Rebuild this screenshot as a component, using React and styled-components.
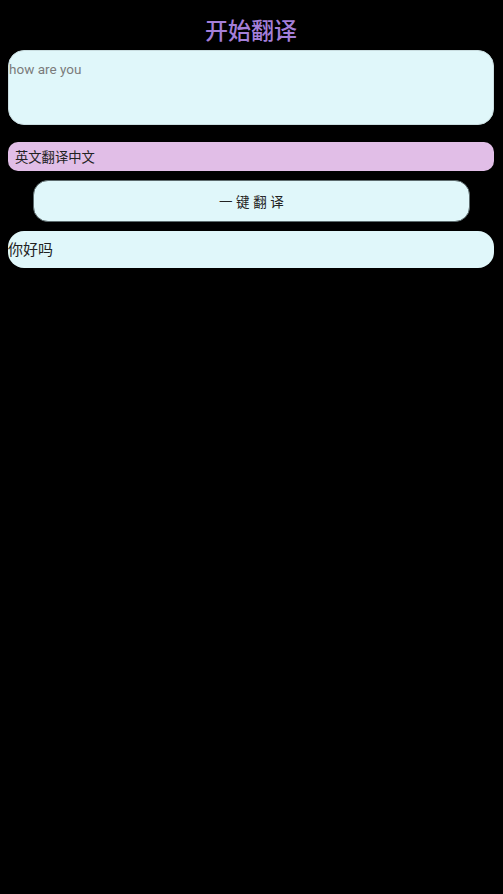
import React, { useState } from 'react'
import styled, { createGlobalStyle } from 'styled-components'

const GlobalStyle = createGlobalStyle`
    html, body {
        margin: 0;
        padding: 0;
        background: #000000;
    }
    body {
        font-family: Roboto, "Noto Sans CJK SC", sans-serif;
    }
`

const Page = styled.div`
    width: 503px;
    min-height: 894px;
    background: #000000;
    padding: 0 9px 0 8px;
    box-sizing: border-box;
    display: flex;
    flex-direction: column;
`

const Title = styled.h1`
    margin: 12px 0 4px 0;
    height: 34px;
    line-height: 34px;
    text-align: center;
    font-family: "Noto Sans CJK SC", sans-serif;
    font-weight: 500;
    font-size: 23px;
    color: #a47fd9;
`

const InputArea = styled.textarea`
    height: 75px;
    box-sizing: border-box;
    margin: 0;
    padding: 8px 0 0 0;
    border: 1px solid #c9dde0;
    border-radius: 16px;
    background: #e0f7fa;
    resize: none;
    outline: none;
    font-family: Roboto, "Noto Sans CJK SC", sans-serif;
    font-size: 13.5px;
    line-height: 20px;
    color: #222222;
    &::placeholder {
        color: #7b7b7b;
    }
`

const ModeBar = styled.div`
    margin-top: 17px;
    height: 29px;
    box-sizing: border-box;
    padding-left: 7px;
    display: flex;
    align-items: center;
    border-radius: 10px;
    background: #e1bee7;
    font-family: "Noto Sans CJK SC", sans-serif;
    font-size: 13.3px;
    color: #222222;
`

const TranslateBtn = styled.button`
    margin: 9px 24px 0 25px;
    height: 42px;
    border: 1px solid #5d6b6d;
    border-radius: 15px;
    background: #e0f7fa;
    font-family: "Noto Sans CJK SC", sans-serif;
    font-size: 13.5px;
    letter-spacing: 0.3px;
    color: #222222;
    cursor: pointer;
`

const ResultBox = styled.div`
    margin-top: 9px;
    height: 37px;
    box-sizing: border-box;
    padding-bottom: 2px;
    display: flex;
    align-items: center;
    border-radius: 16px;
    background: #e0f7fa;
    font-family: "Noto Sans CJK SC", sans-serif;
    font-size: 15px;
    color: #222222;
`

export default function App() {
    const [text, setText] = useState('')
    const [result, setResult] = useState('你好吗')

    const translate = () => {
        if (text.trim() === '') return
        setResult('你好吗')
    }

    return (
        <>
            <GlobalStyle />
            <Page>
                <Title>开始翻译</Title>
                <InputArea
                    placeholder="how are you"
                    value={text}
                    onChange={e => setText(e.target.value)}
                />
                <ModeBar>英文翻译中文</ModeBar>
                <TranslateBtn onClick={translate}>一 键 翻 译</TranslateBtn>
                <ResultBox>{result}</ResultBox>
            </Page>
        </>
    )
}
